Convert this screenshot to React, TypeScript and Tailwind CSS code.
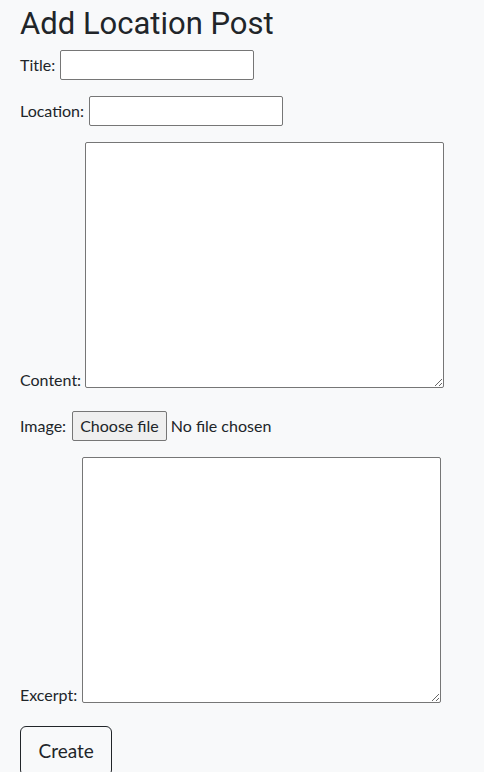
import React from 'react';

export default function App() {
  return (
    <div className="min-h-screen bg-[#f8f9fa] text-[#212529] font-['Lato','Noto_Sans',sans-serif] text-[16px] leading-[1.5]">
      <div className="px-5">
        <h1 className="pt-[5px] mb-[8px] font-['Roboto',sans-serif] text-[31px] leading-[1.2] font-normal">
          Add Location Post
        </h1>
        <form className="flex flex-col gap-[16px]">
          <div className="flex items-center gap-[5px]">
            <label htmlFor="title">Title:</label>
            <input id="title" type="text" className="w-[194px] h-[30px] bg-white border border-[#767676] rounded-[2px] px-1" />
          </div>
          <div className="flex items-center gap-[5px]">
            <label htmlFor="location">Location:</label>
            <input id="location" type="text" className="w-[194px] h-[30px] bg-white border border-[#767676] rounded-[2px] px-1" />
          </div>
          <div className="flex items-end gap-[4px]">
            <label htmlFor="content" className="leading-[1.2] mb-[-1px]">Content:</label>
            <textarea id="content" className="w-[359px] h-[246px] bg-white border border-[#767676] rounded-[2px]" />
          </div>
          <div className="flex items-center gap-[6px] mt-[7px]">
            <span>Image:</span>
            <label className="flex items-center gap-[4px] cursor-pointer">
              <input id="image" type="file" className="sr-only" />
              <span className="h-[30px] px-[7px] flex items-center bg-[#efefef] border border-[#767676] rounded-[2px]">
                Choose file
              </span>
              <span>No file chosen</span>
            </label>
          </div>
          <div className="flex items-end gap-[5px]">
            <label htmlFor="excerpt" className="leading-[1.2] mb-[-1px]">Excerpt:</label>
            <textarea id="excerpt" className="w-[359px] h-[246px] bg-white border border-[#767676] rounded-[2px]" />
          </div>
          <div className="mt-[7px]">
            <button type="submit" className="h-[50px] px-[17.5px] border border-[#212529] rounded-[6px] text-[19px]">
              Create
            </button>
          </div>
        </form>
      </div>
    </div>
  );
}
